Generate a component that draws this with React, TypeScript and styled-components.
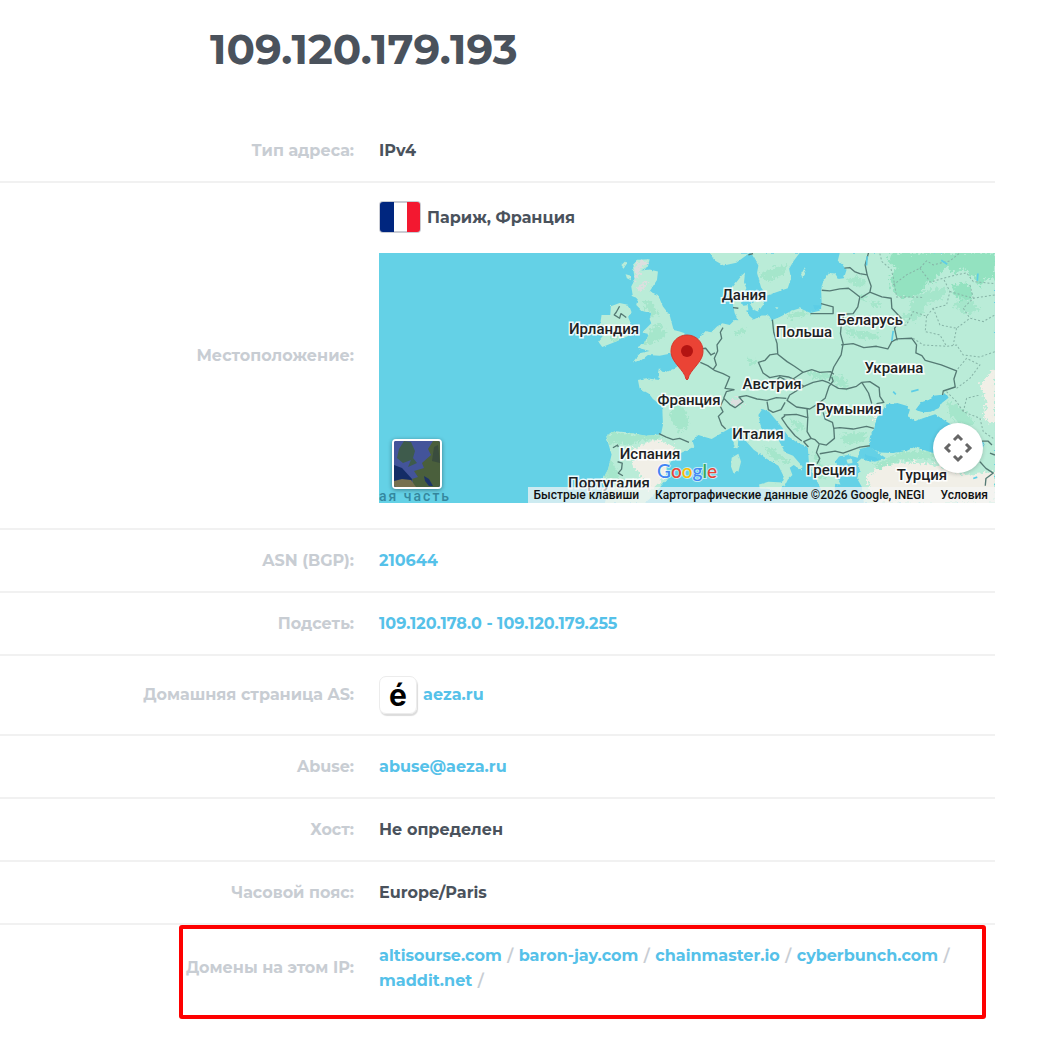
import React from "react";
import styled, { createGlobalStyle } from "styled-components";

const GlobalStyle = createGlobalStyle`
  *, *::before, *::after { box-sizing: border-box; }
  body {
    margin: 0;
    background: #fff;
    color: #4a525c;
    font-family: Montserrat, Inter, "Open Sans", sans-serif;
  }
`;

const Page = styled.main`
  min-height: 100vh;
  padding: 0 55px 24px 0;
`;

const Title = styled.h1`
  margin: 0;
  padding: 22px 0 44px 20vw;
  font-size: 42px;
  line-height: 54px;
  font-weight: 700;
`;

const Details = styled.dl`
  margin: 0;
`;

const Row = styled.div`
  position: relative;
  display: grid;
  grid-template-columns: 8fr 13fr;
  align-items: center;
  border-bottom: 2px solid #f1f1f1;
  font-size: 16px;
  line-height: 25px;
  font-weight: 700;

  &:last-child {
    border-bottom: 0;
  }
`;

const Label = styled.dt`
  padding-right: 25px;
  color: #c8cdd3;
  text-align: right;
`;

const Value = styled.dd<{ $tall?: boolean }>`
  margin: 0;
  min-width: 0;
  padding: 18px 0 ${(p) => (p.$tall ? 25 : 18)}px;
`;

const Line = styled.div<{ $height: number }>`
  display: flex;
  align-items: center;
  gap: 6px;
  min-height: ${(p) => p.$height}px;
`;

const Link = styled.a`
  color: #55c1e9;
  text-decoration: none;
`;

const Slash = styled.span`
  margin: 0 1px;
  color: #c8cdd3;
  font-weight: 600;
`;

const Highlight = styled.div`
  position: absolute;
  inset: 0 9px -8px 18%;
  border: 4px solid #fe0000;
  border-radius: 3px;
  pointer-events: none;
`;

const Flag = styled.svg`
  width: 42px;
  height: 32px;
`;

const SiteIcon = styled.span`
  display: grid;
  place-items: center;
  width: 38px;
  height: 38px;
  border: 1px solid #ececec;
  border-radius: 7px;
  box-shadow: 1px 2px 1px #dcdcdc;
  color: #000;
  font-family: Inter, sans-serif;
  font-size: 30px;
  line-height: 30px;
  font-weight: 700;
`;

const MapFrame = styled.div`
  position: relative;
  overflow: hidden;
  margin-top: 20px;
  aspect-ratio: 616 / 250;
  background: #64d1e6;
  font-family: Roboto, sans-serif;
`;

const MapArt = styled.svg`
  display: block;
  width: 100%;
  height: 100%;
`;

const Country = styled.span<{ $x: number; $y: number }>`
  position: absolute;
  left: ${(p) => (p.$x / 616) * 100}%;
  top: ${(p) => (p.$y / 250) * 100}%;
  transform: translate(-50%, -50%);
  color: #202124;
  font-size: 15px;
  line-height: 16px;
  font-weight: 500;
  white-space: nowrap;
  -webkit-text-stroke: 3px rgba(255, 255, 255, 0.9);
  paint-order: stroke fill;
`;

const OceanName = styled.span`
  position: absolute;
  left: 0;
  bottom: 0;
  color: #35889f;
  font-size: 14px;
  line-height: 14px;
  font-weight: 500;
  letter-spacing: 2px;
`;

const Pin = styled.svg`
  position: absolute;
  left: 50%;
  top: 81px;
  width: 34px;
  height: 47px;
  transform: translateX(-50%);
`;

const SatelliteButton = styled.button`
  position: absolute;
  left: 13px;
  bottom: 14px;
  width: 50px;
  height: 50px;
  padding: 0;
  overflow: hidden;
  border: 2px solid #fff;
  border-radius: 4px;
  background: #314784;
  box-shadow: 0 1px 4px rgba(0, 0, 0, 0.4);

  svg {
    display: block;
    width: 100%;
    height: 100%;
  }
`;

const PanButton = styled.button`
  position: absolute;
  right: 12px;
  bottom: 30px;
  width: 50px;
  height: 50px;
  padding: 0;
  border: 0;
  border-radius: 50%;
  background: #fff;
  box-shadow: 0 1px 4px rgba(0, 0, 0, 0.2);

  svg {
    display: block;
    width: 100%;
    height: 100%;
  }
`;

const GoogleLogo = styled.span`
  position: absolute;
  left: 50%;
  bottom: 24px;
  display: flex;
  transform: translateX(-50%);
  font-family: Lato, sans-serif;
  font-size: 19px;
  line-height: 16px;
  font-weight: 500;
  -webkit-text-stroke: 2px rgba(255, 255, 255, 0.6);
  paint-order: stroke fill;
`;

const Letter = styled.span<{ $color: string }>`
  color: ${(p) => p.$color};
`;

const Attribution = styled.div`
  position: absolute;
  right: 0;
  bottom: 0;
  display: flex;
  gap: 16px;
  padding: 0 7px 0 6px;
  background: rgba(245, 245, 245, 0.72);
  color: #111;
  font-size: 12px;
  line-height: 16px;
  font-weight: 500;
  white-space: nowrap;

  button,
  a {
    padding: 0;
    border: 0;
    background: none;
    color: inherit;
    font: inherit;
    text-decoration: none;
  }
`;

const countries: [string, number, number][] = [
  ["Ирландия", 225, 76],
  ["Дания", 365, 42],
  ["Польша", 425, 79],
  ["Беларусь", 491, 67],
  ["Украина", 515, 115],
  ["Австрия", 393, 131],
  ["Франция", 310, 147],
  ["Румыния", 470, 156],
  ["Италия", 379, 181],
  ["Испания", 271, 201],
  ["Португалия", 230, 230],
  ["Греция", 452, 217],
  ["Турция", 543, 222],
];

const mainland =
  "M-125 405L-100 400L-62 405L-65 385L-62 370L-52 380L-40 382L-15 370L0 360L12 340L30 325L48 300L60 275L75 258L95 262L112 245L128 235L150 240L165 225L176 226L165 205L160 180L158 150L158 128L170 112L186 92L196 83L193 112L200 130L190 150L184 172L196 190L206 210L222 224L246 212L268 212L276 226L300 216L334 198L360 190L392 204L416 198L426 182L424 134L430 110L448 84L466 86L476 102L492 100L500 76L488 60L474 48L480 24H945V774H552L546 726L532 700L540 676L534 650L545 640L585 650L620 640L570 604L540 612L534 638L504 630L478 634L466 650L486 684L470 690L482 718L466 716L464 752L446 742L436 756L420 726L406 694L388 660L384 606L352 592L326 574L306 546L284 520L268 500L248 492L236 510L244 548L262 570L296 584L316 622L340 632L368 664L366 676L342 660L330 668L338 690L324 704L314 724L304 716L312 694L296 662L262 642L222 614L190 578L174 550L154 548L130 562L96 582L56 570L38 586L44 604L12 620L-14 632L-38 668L-36 700L-60 728L-90 762L-104 774H-224L-214 732L-228 698L-214 672L-204 628L-220 574L-200 558L-160 562L-100 572L-56 568L-50 540L-52 484L-80 462L-92 446L-120 430Z";

const islands = [
  "M-140 60L-125 45L-90 43L-95 65L-115 77L-90 74L-65 80L-68 105L-90 140L-65 150L-50 185L-30 210L-18 255L0 260L15 265L8 290L-16 310L-8 322L-60 332L-95 330L-115 346L-140 352L-120 325L-90 318L-128 308L-115 300L-100 285L-92 268L-112 262L-85 235L-90 222L-85 205L-112 198L-130 180L-125 160L-140 155L-145 125L-135 105Z",
  "M-176 62L-164 50L-158 56L-168 72Z",
  "M-162 88L-148 92L-146 106L-158 100Z",
  "M-234 210L-208 210L-206 184L-180 174L-152 180L-144 202L-154 218L-146 236L-156 274L-190 290L-232 306L-244 290L-228 270L-240 250Z",
  "M214 24L236 62L232 84L244 128L262 152L296 140L324 130L334 100L328 72L342 48L360 24Z",
  "M90 24L104 46L132 62L170 54L210 24Z",
  "M210 176L232 164L248 160L252 178L236 200L222 196Z",
  "M186 184L204 180L206 196L192 198Z",
  "M364 88L374 70L378 84L368 100Z",
  "M286 186L296 188L292 194Z",
  "M166 566L176 574L174 610L166 608L160 588Z",
  "M156 638L176 626L184 650L176 680L162 686L154 664Z",
  "M238 718L266 710L310 712L302 742L268 732L240 730Z",
  "M500 644L516 640L518 654L504 656Z",
];

const seas = [
  "M568 606L570 576L584 548L590 520L606 500L620 478L652 474L680 482L690 494L684 514L706 528L740 516L766 508L800 530L850 560L900 576L914 606L880 624L820 640L760 624L704 606L680 618L640 624L600 622Z",
  "M706 496L724 472L748 464L760 452L800 448L806 458L786 474L776 490L752 500L730 502Z",
  "M556 630L584 636L600 642L572 650L552 644Z",
  "M400 180L424 182L424 194L404 192Z",
];

const forests = [
  "M640 24H945V104L916 100L900 130L880 96L850 70L822 86L800 66L770 96L760 118L742 112L720 150L680 158L660 156L636 130L632 96L650 70L620 50Z",
  "M820 120L860 116L880 150L850 176L822 150Z",
];

const woods = [
  "M-220 574L-200 560L-120 570L-56 568L-60 584L-110 584L-150 600L-190 592L-216 600Z",
  "M-80 240L-60 236L-40 270L-60 286L-100 300L-106 270L-84 262Z",
  "M-112 168L-84 170L-64 208L-84 216Z",
  "M-220 250L-180 240L-160 270L-200 290Z",
  "M320 206L380 200L390 210L330 222Z",
  "M380 380L440 384L496 400L506 432L480 426L452 400L400 402Z",
  "M540 150L566 148L560 164L544 170Z",
  "M570 170L606 176L596 186L576 186Z",
  "M500 250L560 262L600 270L590 284L540 278L496 266Z",
  "M500 110L530 90L560 110L540 128Z",
  "M710 150L760 132L800 128L790 160L740 176L730 200L700 236L690 180Z",
  "M820 176L860 160L900 190L870 210L840 200Z",
  "M660 210L700 200L710 214L680 230Z",
  "M160 260L200 250L190 264L166 272Z",
  "M204 340L234 348L226 362L208 356Z",
  "M250 600L280 614L330 650L320 656L270 634Z",
  "M800 470L850 490L880 530L860 550L810 510Z",
  "M-20 470L10 480L30 540L0 560L-30 520Z",
  "M240 84L270 74L310 60L326 66L306 90L270 110L250 104Z",
  "M580 660L660 622L740 616L820 644L740 640L660 648L600 674Z",
  "M400 620L420 640L440 700L420 700Z",
  "M480 570L560 560L550 590L490 596Z",
  "M-220 640L-200 650L-180 700L-220 740Z",
  "M330 520L360 530L380 552L350 556Z",
];

const sands = [
  "M560 690L620 660L700 650L780 664L860 690L945 680V774H580Z",
  "M900 420L945 370V540L910 520L920 470Z",
  "M-140 610L-70 584L-10 606L-30 650L-50 700L-90 740L-110 700L-140 660Z",
  "M586 500L596 500L588 524L578 530Z",
];

const highlands = [
  "M-126 50L-94 46L-100 60L-118 72L-124 100L-140 112L-134 90L-136 70Z",
  "M-126 130L-104 112L-92 110L-104 128L-120 140Z",
  "M150 466L172 458L196 470L180 482L158 484Z",
];

const borders = [
  "M130 248L122 262L126 280L112 300L114 318L104 340L110 360L100 374",
  "M60 312L78 310L94 330L106 324M62 352L84 362L104 376L130 386L150 396L136 430L164 434",
  "M164 434L140 440L132 460L150 478L166 488L190 470L178 456L200 452L232 462L262 466L290 458L320 460",
  "M132 462L122 484L130 500L116 514L126 540L138 552",
  "M278 224L282 262L292 296L294 326L270 330L256 346L236 352L250 384L270 398L300 392L326 396L340 402L370 382L344 364L322 350L294 328",
  "M370 382L396 374L420 382L452 380L462 388",
  "M340 402L372 424L400 412L428 406L448 414",
  "M372 424L330 450L322 466L350 486L390 492L412 478L436 460L448 424L460 408L456 396",
  "M262 470L266 494L280 502L304 494L316 472",
  "M316 512L306 520L324 546L346 572L366 588M312 510L350 508L384 518L382 560L394 580L372 590L386 606",
  "M384 518L382 492M430 502L436 522L458 532L462 550L480 548L520 552L560 544L582 550",
  "M462 550L464 580L440 600L418 596L406 584L394 580M418 598L410 622L420 640L412 656M420 626L466 618L490 624L540 606L570 602",
  "M278 420L300 396L320 406",
  "M426 136L450 138L480 132L506 130L522 142L540 156L534 186L520 206L492 208M392 206L460 206L460 186L424 176",
  "M494 70L510 68L524 80L540 86L562 90L574 124L570 142L544 158M570 142L606 156L634 160L636 190L664 220L644 250L652 286",
  "M562 90L556 60L566 24M492 208L484 244L482 266L490 296L484 330L462 366L448 408",
  "M484 300L520 296L552 308L590 304L624 312L636 290L652 282L696 280L710 300L708 324L726 332L736 346L784 360L830 378L822 402L826 426L790 438L788 450",
  "M448 414L476 430L500 432L530 424L546 412L570 410L598 428L600 454L612 472L590 476M546 412L566 444L576 476",
  "M-200 608L-186 600L-184 606M-186 650L-172 654L-174 672L-184 684L-170 692M-62 566L-40 576L-20 584L0 580L28 592",
  "M-180 184L-190 202L-196 210L-180 220L-176 206L-160 218",
  "M206 30L220 26M160 188L176 190",
  "M906 588L924 588L936 600M930 624L945 630M900 650L918 670L940 684L918 700L916 722",
];

const regions = [
  "M600 26L606 50L634 74L640 96L646 130L650 156L700 156L730 158M640 120L680 90L720 70L740 48L760 60L810 48L840 24",
  "M720 70L752 112L790 100L830 90L860 84L880 110L940 116",
  "M650 244L680 240L700 200L740 214L760 190L800 180L810 140L790 100",
  "M700 280L730 300L800 304L830 300L850 330L900 336L945 320",
  "M760 190L780 240L830 250L870 220L910 230L945 210M830 250L820 300M870 120L880 160L850 190L870 220",
  "M800 440L830 470L850 500L900 520L910 560L940 580M830 430L870 400L900 360L860 340L830 376M850 500L860 460L900 450",
  "M740 214L736 260L780 270L800 304M810 140L880 160L945 150",
];

const chevrons = ["M21 17L25 13L29 17", "M21 33L25 37L29 33", "M17 21L13 25L17 29", "M33 21L37 25L33 29"];

const logo: [string, string][] = [
  ["G", "#4285f4"],
  ["o", "#ea4335"],
  ["o", "#fbbc05"],
  ["g", "#4285f4"],
  ["l", "#34a853"],
  ["e", "#ea4335"],
];

const domains = ["altisourse.com", "baron-jay.com", "chainmaster.io", "cyberbunch.com", "maddit.net"];

function Shapes({ paths, fill }: { paths: string[]; fill: string }) {
  return (
    <g fill={fill}>
      {paths.map((d) => (
        <path key={d} d={d} />
      ))}
    </g>
  );
}

function EuropeMap() {
  return (
    <MapFrame>
      <MapArt viewBox="-901 24 1846 750" preserveAspectRatio="xMidYMid slice" aria-hidden="true">
        <defs>
          <filter id="coast" x="-5%" y="-5%" width="110%" height="110%">
            <feTurbulence type="fractalNoise" baseFrequency="0.09" numOctaves="2" seed="4" />
            <feDisplacementMap in="SourceGraphic" scale="8" xChannelSelector="R" yChannelSelector="G" />
          </filter>
          <filter id="patches" x="-5%" y="-5%" width="110%" height="110%">
            <feTurbulence type="fractalNoise" baseFrequency="0.12" numOctaves="2" seed="9" />
            <feDisplacementMap in="SourceGraphic" scale="30" xChannelSelector="R" yChannelSelector="G" />
          </filter>
          <clipPath id="land">
            <path d={mainland} />
            {islands.map((d) => (
              <path key={d} d={d} />
            ))}
          </clipPath>
        </defs>
        <g filter="url(#coast)">
          <Shapes paths={[mainland, ...islands]} fill="#baecd8" />
        </g>
        <g clipPath="url(#land)">
          <g filter="url(#patches)">
            <Shapes paths={forests} fill="#93e2c0" />
            <Shapes paths={woods} fill="#a5e6cb" />
            <Shapes paths={sands} fill="#f1efe7" />
            <Shapes paths={highlands} fill="#dcdfdf" />
          </g>
        </g>
        <g filter="url(#coast)">
          <Shapes paths={seas} fill="#5ccde6" />
          <path d="M684 512L696 488L714 498L738 508L706 528Z" fill="#baecd8" />
        </g>
        <g fill="none" stroke="#557a74" strokeWidth="4" strokeLinejoin="round">
          {borders.map((d) => (
            <path key={d} d={d} />
          ))}
        </g>
        <g fill="none" stroke="#86b3a6" strokeWidth="3" strokeDasharray="6 6">
          {regions.map((d) => (
            <path key={d} d={d} />
          ))}
        </g>
        <g fill="none" stroke="#5ccde6" strokeWidth="5">
          <path d="M640 258L636 288M694 440L716 434M880 700L892 696M562 34L560 62M784 46L802 58M894 86L892 108M640 440L648 448" />
        </g>
      </MapArt>
      <OceanName>ая часть</OceanName>
      {countries.map(([name, x, y]) => (
        <Country key={name} $x={x} $y={y}>
          {name}
        </Country>
      ))}
      <GoogleLogo>
        {logo.map(([letter, color], i) => (
          <Letter key={i} $color={color}>
            {letter}
          </Letter>
        ))}
      </GoogleLogo>
      <Pin viewBox="0 0 34 47" aria-hidden="true">
        <path
          d="M17 1C8 1 1 8 1 17C1 23 4 27 8 32C12 37 15 40 16 45Q17 47 18 45C19 40 22 37 26 32C30 27 33 23 33 17C33 8 26 1 17 1Z"
          fill="#ea4335"
          stroke="#d5382c"
          strokeWidth="1"
        />
        <circle cx="17" cy="17" r="6" fill="#b31412" />
      </Pin>
      <SatelliteButton type="button" aria-label="Спутник">
        <svg viewBox="0 0 46 46" aria-hidden="true">
          <rect width="46" height="46" fill="#43549a" />
          <path d="M0 24L8 27L18 38L16 46H0Z" fill="#142c66" />
          <path d="M5 8L10 0L17 1L21 10L19 17L23 22L14 26L17 19L9 22L3 17Z" fill="#3e5b4c" />
          <path d="M46 0H39L34 8L37 14L28 22L30 27L20 30L24 36L18 38L20 46H46Z" fill="#4a5f3c" />
          <path d="M30 35L35 38L39 45H35L31 40Z" fill="#1d3468" />
          <path d="M0 40L8 38L17 39L22 46H0Z" fill="#77704f" />
          <path d="M40 6L44 4L46 22L38 20Z" fill="#3a4d3e" />
        </svg>
      </SatelliteButton>
      <PanButton type="button" aria-label="Управление камерой">
        <svg viewBox="0 0 50 50" fill="none" stroke="#666" strokeWidth="3" aria-hidden="true">
          {chevrons.map((d) => (
            <path key={d} d={d} />
          ))}
        </svg>
      </PanButton>
      <Attribution>
        <button type="button">Быстрые клавиши</button>
        <span>Картографические данные ©2026 Google, INEGI</span>
        <a href="#terms">Условия</a>
      </Attribution>
    </MapFrame>
  );
}

export default function App() {
  return (
    <>
      <GlobalStyle />
      <Page>
        <Title>109.120.179.193</Title>
        <Details>
          <Row>
            <Label>Тип адреса:</Label>
            <Value>IPv4</Value>
          </Row>
          <Row>
            <Label>Местоположение:</Label>
            <Value $tall>
              <Line $height={32}>
                <Flag viewBox="0 0 42 32" aria-hidden="true">
                  <rect x="1" y="1" width="40" height="30" rx="3" fill="#fff" stroke="#c9ccd4" strokeWidth="2" />
                  <path d="M15 1V31H4Q1 31 1 28V4Q1 1 4 1Z" fill="#00267f" />
                  <path d="M28 1V31H38Q41 31 41 28V4Q41 1 38 1Z" fill="#f31830" />
                </Flag>
                Париж, Франция
              </Line>
              <EuropeMap />
            </Value>
          </Row>
          <Row>
            <Label>ASN (BGP):</Label>
            <Value>
              <Link href="#asn">210644</Link>
            </Value>
          </Row>
          <Row>
            <Label>Подсеть:</Label>
            <Value>
              <Link href="#subnet">109.120.178.0 - 109.120.179.255</Link>
            </Value>
          </Row>
          <Row>
            <Label>Домашняя страница AS:</Label>
            <Value>
              <Line $height={42}>
                <SiteIcon aria-hidden="true">é</SiteIcon>
                <Link href="#aeza">aeza.ru</Link>
              </Line>
            </Value>
          </Row>
          <Row>
            <Label>Abuse:</Label>
            <Value>
              <Link href="mailto:abuse@aeza.ru">abuse@aeza.ru</Link>
            </Value>
          </Row>
          <Row>
            <Label>Хост:</Label>
            <Value>Не определен</Value>
          </Row>
          <Row>
            <Label>Часовой пояс:</Label>
            <Value>Europe/Paris</Value>
          </Row>
          <Row>
            <Label>Домены на этом IP:</Label>
            <Value>
              {domains.map((domain) => (
                <React.Fragment key={domain}>
                  <Link href={`#${domain}`}>{domain}</Link> <Slash>/</Slash>{" "}
                </React.Fragment>
              ))}
            </Value>
            <Highlight />
          </Row>
        </Details>
      </Page>
    </>
  );
}
